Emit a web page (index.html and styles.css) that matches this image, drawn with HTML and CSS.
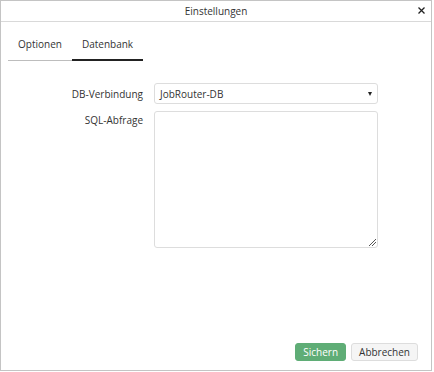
FILE: index.html
```html
<!DOCTYPE html>
<html>
<head>
<meta charset="utf-8">
<link rel="stylesheet" href="styles.css">
</head>
<body>
<div class="dialog">
  <div class="header">
    <span class="title">Einstellungen</span>
    <svg class="close" width="7" height="7" viewBox="0 0 7 7"><path d="M0.5 0.5 L6.5 6.5 M6.5 0.5 L0.5 6.5" stroke="#222" stroke-width="1.3" fill="none"/></svg>
  </div>
  <div class="content">
    <div class="tabs">
      <div class="tab">Optionen</div>
      <div class="tab active">Datenbank</div>
    </div>
    <div class="form">
      <div class="row center">
        <label class="label">DB-Verbindung</label>
        <div class="select"><span>JobRouter-DB</span><span class="caret"></span></div>
      </div>
      <div class="row">
        <label class="label top">SQL-Abfrage</label>
        <div class="textarea">
          <svg class="grip" width="7" height="7" viewBox="0 0 7 7"><g fill="#555"><rect x="6" y="0" width="1" height="1"/><rect x="5" y="1" width="1" height="1"/><rect x="4" y="2" width="1" height="1"/><rect x="3" y="3" width="1" height="1"/><rect x="2" y="4" width="1" height="1"/><rect x="1" y="5" width="1" height="1"/><rect x="0" y="6" width="1" height="1"/><rect x="6" y="3" width="1" height="1"/><rect x="5" y="4" width="1" height="1"/><rect x="4" y="5" width="1" height="1"/><rect x="3" y="6" width="1" height="1"/></g></svg>
        </div>
      </div>
    </div>
  </div>
  <div class="footer">
    <button class="btn primary">Sichern</button>
    <button class="btn">Abbrechen</button>
  </div>
</div>
</body>
</html>
```
FILE: styles.css
```css
html, body { margin: 0; padding: 0; background: #fff; }
body { font-family: "Open Sans", "DejaVu Sans", sans-serif; font-size: 10px; color: #333; }
.dialog {
  width: 432px; height: 371px; box-sizing: border-box;
  border: 1px solid #c4c4c4;
  display: flex; flex-direction: column;
}
.header {
  height: 21px; box-sizing: border-box; border-bottom: 1px solid #d9d9d9;
  display: flex; align-items: center; justify-content: center; position: relative;
}
.title { color: #333; line-height: 14px; }
.close { position: absolute; right: 6px; top: 6px; }
.content { flex: 1; }
.tabs { display: flex; margin: 15px 0 0 7px; }
.tab { padding: 0 10px 9px 10px; line-height: 14px; border-bottom: 1px solid #bdbdbd; }
.tab.active { border-bottom: 2px solid #222; padding-bottom: 8px; }
.form { margin-top: 22px; display: flex; flex-direction: column; gap: 7px; }
.row { display: flex; align-items: flex-start; }
.row.center { align-items: center; }
.label { width: 142px; margin-right: 11px; text-align: right; line-height: 14px; }
.label.top { padding-top: 2px; }
.select {
  width: 224px; height: 21px; box-sizing: border-box;
  border: 1px solid #ddd; border-radius: 3px;
  display: flex; align-items: center; justify-content: space-between;
  padding: 0 5px 0 5px;
}
.caret {
  width: 0; height: 0;
  border-left: 2.5px solid transparent; border-right: 2.5px solid transparent;
  border-top: 4px solid #222; margin-top: 1px;
}
.textarea {
  width: 224px; height: 137px; box-sizing: border-box;
  border: 1px solid #ddd; border-radius: 3px; position: relative;
}
.grip { position: absolute; right: 1px; bottom: 1px; }
.footer { display: flex; justify-content: flex-end; gap: 5px; padding: 0 13px 9px 0; }
.btn {
  font-family: inherit; font-size: 10px; height: 18px; padding: 0 7px;
  border: 1px solid #ddd; border-radius: 3px; background: #f5f5f5; color: #333;
  line-height: 16px; margin: 0;
}
.btn.primary { background: #5fad76; border-color: #5fad76; color: #fff; }
```
